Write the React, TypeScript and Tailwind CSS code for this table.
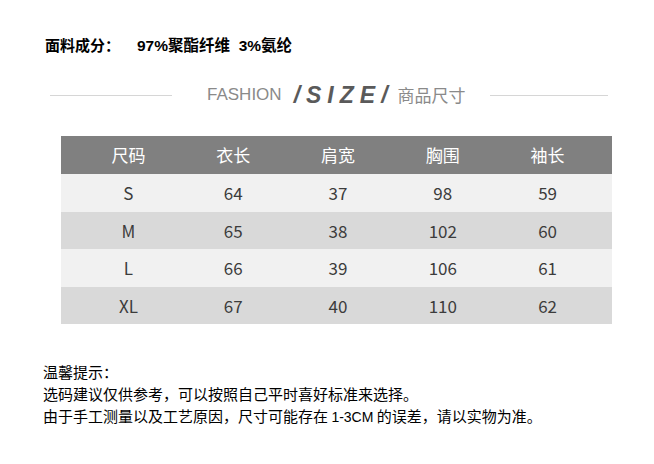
const rows = [
  ["S", "64", "37", "98", "59"],
  ["M", "65", "38", "102", "60"],
  ["L", "66", "39", "106", "61"],
  ["XL", "67", "40", "110", "62"],
];

const heads = ["尺码", "衣长", "肩宽", "胸围", "袖长"];

export default function App() {
  return (
    <div className="w-[654px] h-[464px] bg-white font-['Noto_Sans_CJK_SC',sans-serif] relative">
      <div className="pt-[35px] pl-[45px] flex items-baseline text-[15px] font-bold text-black leading-[22px] font-['Liberation_Sans','Noto_Sans_CJK_SC',sans-serif]">
        <span className="w-[92px]">面料成分：</span>
        <span className="text-[15.5px]">97%聚酯纤维&nbsp;&nbsp;3%氨纶</span>
      </div>

      <div className="mt-[25px] flex items-center h-[26px]">
        <div className="ml-[50px] w-[122px] h-px bg-[#d6d6d6] shrink-0" />
        <div className="ml-[35px] flex items-center text-[#8a8a8a] shrink-0">
          <span className="text-[17px] font-['Liberation_Sans',sans-serif]">FASHION</span>
          <span className="ml-[12px] text-[23px] italic font-bold text-[#5a5a5a] tracking-[6px] font-['Liberation_Sans',sans-serif]">/SIZE/</span>
          <span className="ml-[4px] text-[17px]">商品尺寸</span>
        </div>
        <div className="ml-[24px] w-[118px] h-px bg-[#d6d6d6] shrink-0" />
      </div>

      <div className="mt-[28px] ml-[61px] w-[551px] text-[17px] font-['Noto_Sans_CJK_SC',sans-serif]">
        <div className="grid grid-cols-5 h-[38px] items-center bg-[#808080] text-white pl-[15px] pr-[12px]">
          {heads.map((h) => (
            <div key={h} className="text-center">{h}</div>
          ))}
        </div>
        {rows.map((r, i) => (
          <div
            key={r[0]}
            className={
              "grid grid-cols-5 h-[37.5px] items-center text-[#3c3c3c] pl-[15px] pr-[12px] " +
              (i % 2 === 0 ? "bg-[#f1f1f1]" : "bg-[#d9d9d9]")
            }
          >
            {r.map((c, j) => (
              <div key={j} className="text-center">{c}</div>
            ))}
          </div>
        ))}
      </div>

      <div className="mt-[37px] ml-[43px] text-[15px] leading-[22px] text-black">
        <div>温馨提示：</div>
        <div>选码建议仅供参考，可以按照自己平时喜好标准来选择。</div>
        <div>
          由于手工测量以及工艺原因，尺寸可能存在 <span className="font-['Liberation_Sans',sans-serif] text-[14px]">1-3CM</span> 的误差，请以实物为准。
        </div>
      </div>
    </div>
  );
}
